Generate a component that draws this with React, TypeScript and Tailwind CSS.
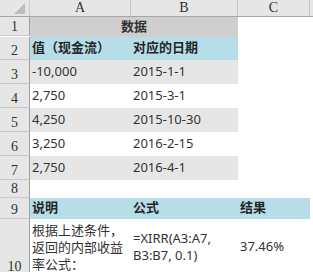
const cjk = "font-['Noto_Sans','Noto_Sans_CJK_SC',sans-serif]";
const serif = "font-['Liberation_Serif','DejaVu_Serif',serif]";

const RowHead = ({ n, h }: { n: number; h: string }) => (
  <div
    className={`${h} ${serif} box-border flex w-[30px] shrink-0 items-end justify-center border-b border-r border-b-[#c9c9c9] border-r-[#9f9f9f] bg-[#e6e6e6] pb-[1px] text-[14px] leading-none text-[#333]`}
  >
    {n}
  </div>
);

const data = [
  { n: 3, a: "-10,000", b: "2015-1-1", shade: true },
  { n: 4, a: "2,750", b: "2015-3-1", shade: false },
  { n: 5, a: "4,250", b: "2015-10-30", shade: true },
  { n: 6, a: "3,250", b: "2016-2-15", shade: false },
  { n: 7, a: "2,750", b: "2016-4-1", shade: true },
];

export default function App() {
  return (
    <div className={`h-[272px] w-[313px] overflow-hidden bg-white ${cjk} text-[13px] text-[#333]`}>
      {/* column headers */}
      <div className={`flex h-[17px] border-b border-[#a5a5a5] bg-[#e6e6e6] ${serif} text-[14px] leading-none text-[#333]`}>
        <div className="relative w-[30px] shrink-0 border-r border-[#c9c9c9]">
          <svg className="absolute left-[14px] top-[3px]" width="11" height="11" viewBox="0 0 11 11">
            <polygon points="11,0 11,11 0,11" fill="#bdbdbd" />
          </svg>
        </div>
        <div className="flex w-[101px] shrink-0 items-center justify-center border-r border-[#c9c9c9]">A</div>
        <div className="flex w-[107px] shrink-0 items-center justify-center border-r border-[#c9c9c9]">B</div>
        <div className="flex w-[72px] shrink-0 items-center justify-center border-r border-[#c9c9c9]">C</div>
        <div className="flex-1" />
      </div>

      {/* row 1 */}
      <div className="flex">
        <RowHead n={1} h="h-[19px]" />
        <div className="flex w-[208px] items-center justify-center bg-[#d0cece] font-bold">数据</div>
      </div>

      {/* row 2 */}
      <div className="flex">
        <RowHead n={2} h="h-[23px]" />
        <div className="flex w-[101px] items-center bg-[#b7dee8] pl-[2px] font-bold text-[#262626]">值（现金流）</div>
        <div className="flex w-[107px] items-center bg-[#b7dee8] pl-[2px] font-bold text-[#262626]">对应的日期</div>
      </div>

      {data.map((r) => (
        <div key={r.n} className="flex">
          <RowHead n={r.n} h="h-[24px]" />
          <div className={`flex w-[101px] items-center pl-[2px] ${r.shade ? "bg-[#e7e6e6]" : ""}`}>{r.a}</div>
          <div className={`flex w-[107px] items-center pl-[2px] ${r.shade ? "bg-[#e7e6e6]" : ""}`}>{r.b}</div>
        </div>
      ))}

      {/* row 8 */}
      <div className="flex">
        <RowHead n={8} h="h-[18px]" />
      </div>

      {/* row 9 */}
      <div className="flex">
        <RowHead n={9} h="h-[21px]" />
        <div className="flex w-[101px] items-center bg-[#b7dee8] pl-[2px] font-bold text-[#262626]">说明</div>
        <div className="flex w-[107px] items-center bg-[#b7dee8] pl-[2px] font-bold text-[#262626]">公式</div>
        <div className="flex w-[72px] items-center bg-[#b7dee8] pl-[2px] font-bold text-[#262626]">结果</div>
      </div>

      {/* row 10 */}
      <div className="flex">
        <RowHead n={10} h="h-[57px]" />
        <div className="flex w-[101px] items-center pl-[2px] leading-[17px]">
          <div>
            根据上述条件，
            <br />
            返回的内部收益
            <br />
            率公式：
          </div>
        </div>
        <div className="flex w-[107px] items-center pl-[2px] leading-[17px]">
          <div>
            =XIRR(A3:A7,
            <br />
            B3:B7, 0.1)
          </div>
        </div>
        <div className="flex w-[72px] items-center pl-[2px]">37.46%</div>
      </div>
    </div>
  );
}
